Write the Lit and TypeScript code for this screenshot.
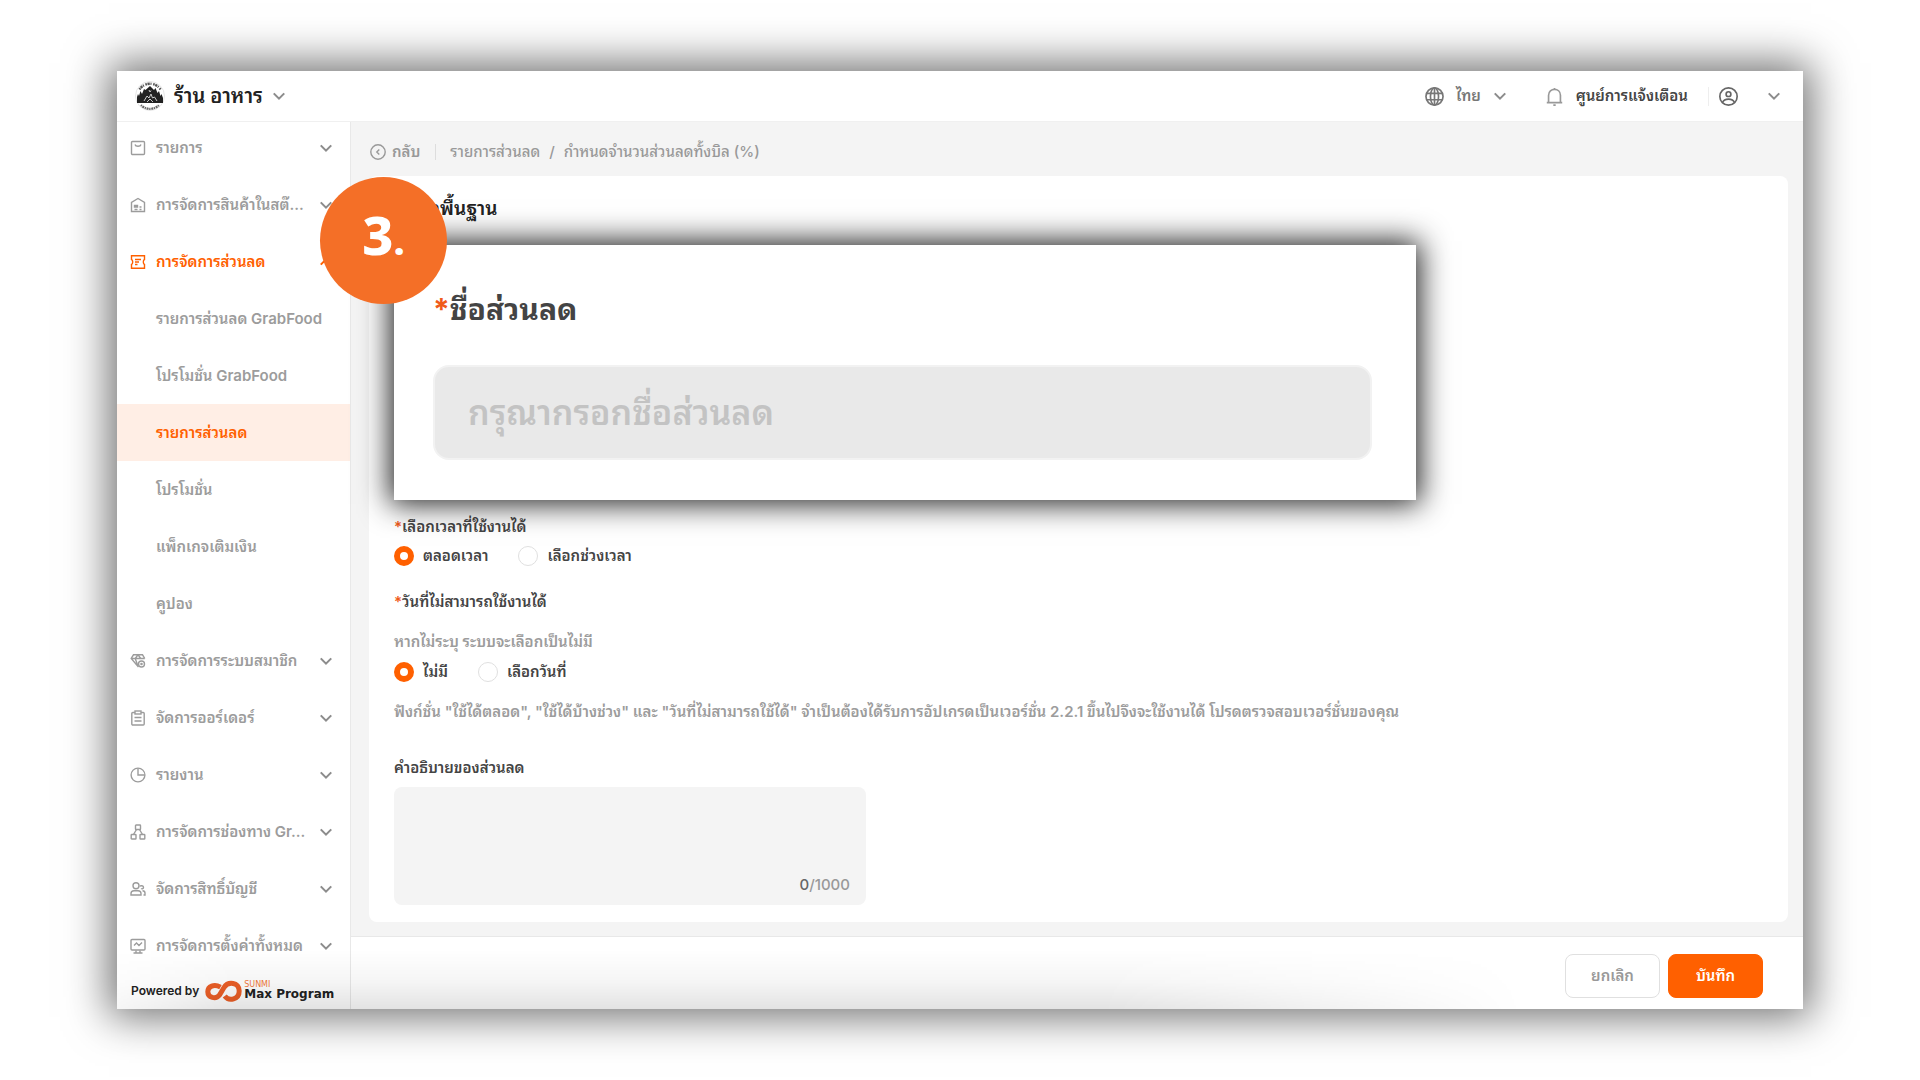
import { LitElement, html, css, svg, nothing } from "lit";
import { customElement, state } from "lit/decorators.js";
import { classMap } from "lit/directives/class-map.js";

const icons: Record<string, unknown> = {
  bag: svg`<rect x="1.5" y="1.5" width="13" height="13" rx="1"/><path d="M5 4.500c.6 2.400 5.400 2.400 6 0"/>`,
  stock: svg`<path d="M1.500 14.500V5.500L8 1.500l6.500 4v9z"/><path d="M4.500 8.500h3v1.500h-3zM4.500 12.500h3M9.500 10h2M9.500 12.500h2"/>`,
  coupon: svg`<path d="M1.500 1.800h13v3.700c-1.600.6-1.600 4.400 0 5v3.700h-13v-3.700c1.600-.6 1.600-4.400 0-5z"/><path d="M5 5.500h6M5 8h4M5 10.500h2.500"/>`,
  member: svg`<path d="M8.500 14L1.200 5.500 3.500 1.800h9l2.300 3.700M1.200 5.500h13.600M5.200 5.500L8 1.800l2.800 3.700M5.200 5.500l2.600 7"/><circle cx="11.500" cy="11" r="3"/><circle cx="11.500" cy="11" r=".6"/>`,
  order: svg`<rect x="1.800" y="2.500" width="12.400" height="12.500" rx="1"/><rect x="5" y="1" width="6" height="3" fill="#fff"/><path d="M4.500 7.500h7M4.500 11h7"/>`,
  report: svg`<circle cx="8" cy="8" r="6.900"/><path d="M8 1.500V8h6.500"/>`,
  channel: svg`<rect x="5.500" y="1" width="5" height="4.500" rx=".6"/><rect x="1.200" y="10.500" width="4.800" height="4.500" rx=".6"/><rect x="10" y="10.500" width="4.800" height="4.500" rx=".6"/><path d="M6.500 5.500L3.500 10.500M9.500 5.500l3 5"/>`,
  account: svg`<circle cx="6" cy="4.800" r="3"/><path d="M1 14v-1.500c0-2 1.500-2.800 3-2.800h4c1.500 0 3 .8 3 2.800V14zM10 5.500c.5-1.200 3.500-1 3.500.8s-1.800 1.700-2.500 1.200M12.500 9.700c1.500 0 2.500.8 2.500 2.300v2h-1.500"/>`,
  settings: svg`<rect x="1" y="1.500" width="14" height="10.500" rx="1"/><path d="M4 7.500l2.500-2.500 2.500 2.500 3-3M3.500 15h9M6 12.500V15M10 12.500V15"/>`,
  back: svg`<circle cx="8" cy="8" r="7.200"/><path d="M9.300 5.500L6.800 8l2.500 2.500"/>`,
  globe: svg`<circle cx="8" cy="8" r="7.200"/><ellipse cx="8" cy="8" rx="3.400" ry="7.200"/><path d="M8 .8v14.400M1.500 5.300h13M1.500 10.700h13"/>`,
  bell: svg`<path d="M1.500 13.200h13M3 13V7c0-6.600 10-6.600 10 0v6M8 .8v1.200M7 15.200h2"/>`,
  user: svg`<circle cx="8" cy="8" r="7.300"/><circle cx="8" cy="6" r="2"/><path d="M3 13c1.500-3.700 8.500-3.700 10 0"/>`,
  down: svg`<path d="M2 5l6 6 6-6"/>`,
  up: svg`<path d="M2 11l6-6 6 6"/>`,
};

const icon = (name: string, cls = "") =>
  html`<svg class="icon ${cls}" viewBox="0 0 16 16" aria-hidden="true">${icons[name]}</svg>`;

interface Item { label: string; icon?: string; open?: boolean; current?: boolean; }

const menu: Item[] = [
  { label: "รายการ", icon: "bag" },
  { label: "การจัดการสินค้าในสต๊...", icon: "stock" },
  { label: "การจัดการส่วนลด", icon: "coupon", open: true },
  { label: "รายการส่วนลด GrabFood" },
  { label: "โปรโมชั่น GrabFood" },
  { label: "รายการส่วนลด", current: true },
  { label: "โปรโมชั่น" },
  { label: "แพ็กเกจเติมเงิน" },
  { label: "คูปอง" },
  { label: "การจัดการระบบสมาชิก", icon: "member" },
  { label: "จัดการออร์เดอร์", icon: "order" },
  { label: "รายงาน", icon: "report" },
  { label: "การจัดการช่องทาง Gr...", icon: "channel" },
  { label: "จัดการสิทธิ์บัญชี", icon: "account" },
  { label: "การจัดการตั้งค่าทั้งหมด", icon: "settings" },
];

@customElement("app-root")
export class AppRoot extends LitElement {
  @state() private description = "";

  static styles = css`
    :host { display: block; background: #fff; font-family: Inter, "Noto Sans Thai Looped", Loma, "Noto Sans", sans-serif; font-size: 15px; line-height: 20px; color: #444; }
    * { box-sizing: border-box; }
    .page { min-height: 100vh; padding: 71px 117px; display: flex; }
    .window { position: relative; flex: 1; min-width: 0; display: flex; flex-direction: column; background: #fff; box-shadow: 0 0 40px 8px rgba(0, 0, 0, 0.56); }
    button { font: inherit; color: inherit; background: none; border: 0; padding: 0; cursor: pointer; }
    a { color: inherit; text-decoration: none; }
    .icon { width: 16px; height: 16px; flex: none; fill: none; stroke: currentColor; stroke-width: 1.4; }
    .chev { width: 14px; height: 14px; stroke-width: 2.4; color: #8c8c8c; }
    .top { display: flex; align-items: center; height: 51px; padding: 0 22px 0 18px; border-bottom: 1px solid #f0f0f0; }
    .shop { display: flex; align-items: center; gap: 9px; font-size: 20px; font-weight: 600; color: #222; }
    .crest { width: 30px; height: 30px; }
    .tools { margin-left: auto; display: flex; align-items: center; }
    .tool { display: flex; align-items: center; gap: 12px; color: #777; font-weight: 600; }
    .tool .icon:first-child { width: 19px; height: 19px; }
    .tool .icon.chev { width: 14px; height: 14px; }
    .tool.notice { margin-left: 38px; gap: 12px; color: #444; }
    .notice .icon { color: #999; }
    .me { margin-left: 20px; padding-left: 10px; border-left: 1px solid #eee; gap: 29px; color: #666; }
    .body { flex: 1; display: flex; }
    .side { flex: none; width: 234px; border-right: 1px solid #e8e8e8; display: flex; flex-direction: column; font-weight: 600; color: #9c9c9c; }
    .menu { list-style: none; margin: -3px 0 0; padding: 0; }
    .row { width: 100%; height: 57px; padding: 0 17px 0 13px; display: flex; align-items: center; gap: 10px; text-align: left; white-space: nowrap; }
    .row .chev { margin-left: auto; }
    .sub { padding-left: 39px; }
    .open, .current { color: #ff6000; }
    .open .chev { color: #ff6000; }
    .current { background: #ffeee5; }
    .powered { display: flex; align-items: center; gap: 6px; padding: 0 14px; height: 34px; color: #222; font-size: 12px; line-height: 12px; white-space: nowrap; }
    .brand { display: flex; align-items: center; gap: 2px; }
    .loop { width: 37px; height: 22px; flex: none; }
    .name { display: flex; flex-direction: column; font-family: "DejaVu Sans", sans-serif; font-weight: 700; }
    .maker { color: #f47b3d; font-size: 8px; line-height: 6px; font-weight: 400; }
    .main { flex: 1; min-width: 0; display: flex; flex-direction: column; background: #f4f4f4; }
    .crumbs { display: flex; align-items: center; height: 54px; padding: 5px 19px 0; color: #999; font-weight: 500; }
    .back { display: flex; align-items: center; gap: 6px; font-weight: 600; padding-right: 15px; margin-right: 14px; border-right: 1px solid #ddd; line-height: 14px; }
    .slash { margin: 0 9px; }
    .card { flex: 1; margin: 0 15px 14px 18px; padding: 21px 25px 17px; border-radius: 8px; background: #fff; }
    h1 { margin: 0 0 24px; font-size: 19px; line-height: 24px; font-weight: 600; color: #222; }
    .focus { position: relative; max-width: 1022px; height: 255px; padding: 42px 44px 40px 39px; background: #fff; box-shadow: 0 0 28px 4px rgba(0, 0, 0, 0.87); display: flex; flex-direction: column; justify-content: space-between; }
    .big { font-size: 30px; line-height: 44px; font-weight: 700; }
    .star { color: #f05a1a; }
    .field { width: 100%; height: 95px; padding: 0 33px; border: 2px solid #f2f2f2; border-radius: 16px; background: #e9e9e9; font: inherit; font-size: 34px; font-weight: 600; outline: 0; }
    .field::placeholder { color: #c3c3c3; opacity: 1; }
    .step { position: absolute; left: -74px; top: -68px; width: 127px; height: 127px; border-radius: 50%; background: #f46f27; color: #fff; font-family: "Noto Sans", sans-serif; font-size: 54px; font-weight: 800; display: flex; justify-content: center; align-items: center; line-height: 54px; padding-bottom: 8px; }
    .dot { font-size: 40px; }
    fieldset { border: 0; margin: 0; padding: 0; min-width: 0; }
    legend, .label { display: block; padding: 0; font-weight: 600; }
    .times { padding-top: 17px; }
    .days { padding-top: 26px; }
    .radios { display: flex; gap: 30px; margin-top: 9px; }
    .radio { display: flex; align-items: center; gap: 9px; font-weight: 600; }
    .radio input { appearance: none; margin: 0; width: 20px; height: 20px; border: 1px solid #e0e0e0; border-radius: 50%; background: #fff; }
    .radio input:checked { border: 6px solid #ff6000; }
    .hint, .note { margin: 20px 0 0; color: #9c9c9c; font-weight: 600; }
    .hint + .radios { margin-top: 10px; }
    .label { margin: 36px 0 9px; }
    .area { position: relative; width: 472px; max-width: 100%; height: 118px; }
    textarea { display: block; width: 100%; height: 100%; border: 0; border-radius: 8px; background: #f4f4f4; resize: none; font: inherit; padding: 12px 16px; outline: 0; }
    .count { position: absolute; right: 16px; bottom: 10px; color: #999; font-weight: 500; }
    .used { color: #666; }
    .foot { display: flex; justify-content: flex-end; align-items: center; gap: 8px; height: 73px; padding: 6px 40px 0; background: #fff; border-top: 1px solid #e8e8e8; }
    .btn { position: relative; z-index: 1; width: 95px; height: 44px; border-radius: 8px; border: 1px solid #e0e0e0; background: #fff; color: #999; font-weight: 600; }
    .save { background: #ff6000; border-color: #ff6000; color: #fff; }
    .shade { position: absolute; left: 0; right: 280px; bottom: 0; height: 60px; pointer-events: none; background: linear-gradient(to bottom, rgba(0, 0, 0, 0), rgba(0, 0, 0, 0.04) 55%, rgba(0, 0, 0, 0.11)); mask-image: linear-gradient(to right, rgba(0, 0, 0, 0.3), #000 120px, #000 70%, transparent); }
  `;

  private row(item: Item) {
    const cls = classMap({ row: true, sub: !item.icon, open: !!item.open, current: !!item.current });
    return html`<li>${item.icon
      ? html`<button class=${cls} type="button" aria-expanded=${item.open ? "true" : "false"}>${icon(item.icon)}<span>${item.label}</span>${icon(item.open ? "up" : "down", "chev")}</button>`
      : html`<a class=${cls} href="#" aria-current=${item.current ? "page" : nothing}>${item.label}</a>`}</li>`;
  }

  private radio(group: string, text: string, checked: boolean) {
    return html`<label class="radio"><input type="radio" name=${group} ?checked=${checked} />${text}</label>`;
  }

  render() {
    return html`<div class="page"><div class="window">
      <header class="top">
        <button class="shop" type="button">
          <svg class="crest" viewBox="0 0 30 30" aria-hidden="true">
            <circle cx="15" cy="15" r="14.500" fill="#fff" stroke="#ccc" stroke-width=".5"/>
            <path d="M4.500 8.500A12.500 12.500 0 0 1 25.500 8.500" fill="none" stroke="#555" stroke-width="2.400" stroke-dasharray="1.600 .6 2.200 .7 1 1.600"/>
            <path d="M6 24A12.500 12.500 0 0 0 24 24" fill="none" stroke="#666" stroke-width="2.200" stroke-dasharray="1.300 .7 2 .6"/>
            <path d="M2 22V16l1-3 1 2 1.500-5L7 13l2-5 1.500 1L15 5l4 4 1.500-2 2 5L24 10l1.500 5 1-2 1.500 4v5z" fill="#222"/>
            <path d="M9 20l3-5 2 2 2-4 1.500 4 2-1 2.500 4M14 9l1 2 1-1.500M12 21l3-3 3 3" fill="none" stroke="#ddd" stroke-width=".9"/>
          </svg>
          <span>ร้าน อาหาร</span>${icon("down", "chev")}
        </button>
        <div class="tools">
          <button class="tool" type="button">${icon("globe")}<span>ไทย</span>${icon("down", "chev")}</button>
          <button class="tool notice" type="button">${icon("bell")}<span>ศูนย์การแจ้งเตือน</span></button>
          <button class="tool me" type="button" aria-label="บัญชี">${icon("user")}${icon("down", "chev")}</button>
        </div>
      </header>
      <div class="body">
        <nav class="side">
          <ul class="menu">${menu.map((m) => this.row(m))}</ul>
          <div class="powered"><span>Powered by</span>
            <div class="brand">
              <svg class="loop" viewBox="0 0 37 22" aria-hidden="true"><g fill="none" stroke="#ec5f27" stroke-width="5"><path d="M15.500 7.200C9 3.500 2.800 6.500 2.800 11.800c0 6 8.200 7.800 11.700 3.200L19 7.500C23 1 34.200 2 34.200 11c0 8.500-10.200 10.700-14.500 5"/></g></svg>
              <div class="name"><span class="maker">SUNMI</span><span>Max Program</span></div>
            </div>
          </div>
        </nav>
        <main class="main">
          <div class="crumbs">
            <a class="back" href="#">${icon("back")}<span>กลับ</span></a>
            <a href="#">รายการส่วนลด</a><span class="slash">/</span><span>กำหนดจำนวนส่วนลดทั้งบิล (%)</span>
          </div>
          <section class="card">
            <h1>ข้อมูลพื้นฐาน</h1>
            <div class="focus">
              <label class="big" for="name"><span class="star">*</span>ชื่อส่วนลด</label>
              <input class="field" id="name" type="text" placeholder="กรุณากรอกชื่อส่วนลด" />
              <div class="step"><span>3<span class="dot">.</span></span></div>
            </div>
            <fieldset>
              <legend class="times"><span class="star">*</span>เลือกเวลาที่ใช้งานได้</legend>
              <div class="radios">${this.radio("time", "ตลอดเวลา", true)}${this.radio("time", "เลือกช่วงเวลา", false)}</div>
            </fieldset>
            <fieldset>
              <legend class="days"><span class="star">*</span>วันที่ไม่สามารถใช้งานได้</legend>
              <p class="hint">หากไม่ระบุ ระบบจะเลือกเป็นไม่มี</p>
              <div class="radios">${this.radio("day", "ไม่มี", true)}${this.radio("day", "เลือกวันที่", false)}</div>
            </fieldset>
            <p class="note">ฟังก์ชั่น "ใช้ได้ตลอด", "ใช้ได้บ้างช่วง" และ "วันที่ไม่สามารถใช้ได้" จำเป็นต้องได้รับการอัปเกรดเป็นเวอร์ชั่น 2.2.1 ขึ้นไปจึงจะใช้งานได้ โปรดตรวจสอบเวอร์ชั่นของคุณ</p>
            <label class="label" for="description">คำอธิบายของส่วนลด</label>
            <div class="area">
              <textarea id="description" maxlength="1000" @input=${(e: Event) => (this.description = (e.target as HTMLTextAreaElement).value)}></textarea>
              <span class="count"><span class="used">${this.description.length}</span>/1000</span>
            </div>
          </section>
          <footer class="foot">
            <button class="btn" type="button">ยกเลิก</button>
            <button class="btn save" type="submit">บันทึก</button>
          </footer>
        </main>
      </div>
      <div class="shade"></div>
    </div></div>`;
  }
}
